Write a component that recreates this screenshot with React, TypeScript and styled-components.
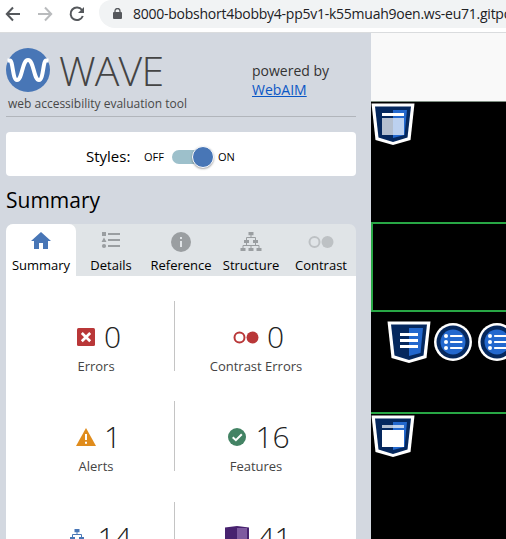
import React from "react";
import styled, { createGlobalStyle } from "styled-components";

const GlobalStyle = createGlobalStyle`
  * { box-sizing: border-box; }
  html, body { margin: 0; padding: 0; height: 100%; overflow: hidden; }
  body { font-family: "Open Sans", "Noto Sans", sans-serif; color: #000; background: #fff; }
`;

const Window = styled.div`
  width: 506px;
  height: 539px;
  display: flex;
  flex-direction: column;
  overflow: hidden;
`;

const BrowserBar = styled.header`
  flex: none;
  height: 33px;
  display: flex;
  background: #fff;
  border-bottom: 1px solid #dadcde;
`;

const NavButtons = styled.div`
  width: 99px;
  height: 28px;
  svg { display: block; }
`;

const AddressBar = styled.div`
  flex: 1;
  height: 28px;
  display: flex;
  background: #f1f3f4;
  border-radius: 12px 0 0 16px;
  overflow: hidden;
`;

const LockBox = styled.div`
  width: 34px;
  flex: none;
  padding: 8px 0 0 14px;
  svg { display: block; }
`;

const Url = styled.span`
  font-size: 14px;
  line-height: 20px;
  padding-top: 4px;
  letter-spacing: -0.25px;
  white-space: nowrap;
  color: #202124;
`;

const Content = styled.div`
  flex: 1;
  min-height: 0;
  display: flex;
`;

const Sidebar = styled.aside`
  width: 371px;
  flex: none;
  padding: 0 15px 0 6px;
  background: #d3d8e0;
  overflow: hidden;
`;

const Brand = styled.div`
  height: 84px;
  display: flex;
  border-bottom: 1px solid #b1b5bb;
`;

const BrandLeft = styled.div`
  width: 246px;
  padding-top: 15px;
`;

const BrandTitle = styled.div`
  height: 44px;
  display: flex;
  gap: 9px;
  svg { flex: none; }
`;

const Wordmark = styled.span`
  font-size: 41px;
  font-weight: 300;
  line-height: 44px;
  letter-spacing: -0.8px;
  color: #444;
`;

const Tagline = styled.div`
  padding: 4px 0 0 2px;
  font-size: 12px;
  line-height: 16px;
  white-space: nowrap;
  color: #484848;
`;

const Powered = styled.div`
  padding-top: 28px;
  font-size: 14px;
  line-height: 19px;
  white-space: nowrap;
  color: #333;
`;

const BrandLink = styled.a`
  display: block;
  color: #0b57c5;
  text-decoration: underline;
`;

const StylesCard = styled.div`
  height: 44px;
  margin-top: 15px;
  padding: 5px 0 0 80px;
  display: flex;
  align-items: center;
  background: #fff;
  border-radius: 4px;
  white-space: nowrap;
`;

const StylesLabel = styled.span`
  width: 58px;
  padding-bottom: 2px;
  font-size: 15px;
  line-height: 20px;
`;

const ToggleText = styled.span<{ $width: number }>`
  width: ${(p) => p.$width}px;
  font-size: 11px;
  line-height: 16px;
`;

const Track = styled.span`
  width: 40px;
  height: 14px;
  margin-right: 6px;
  display: flex;
  align-items: center;
  justify-content: flex-end;
  background: #9dc0cb;
  border-radius: 7px;
`;

const Knob = styled.span`
  width: 22px;
  height: 22px;
  flex: none;
  margin-right: -2px;
  background: #4876b6;
  border: 1px solid #fff;
  border-radius: 50%;
  box-shadow: 0 1px 2px rgba(0, 0, 0, 0.35);
`;

const Heading = styled.h2`
  height: 48px;
  margin: 0;
  padding-top: 10px;
  font-size: 21px;
  font-weight: 400;
  line-height: 28px;
`;

const Tabs = styled.nav`
  height: 52px;
  display: grid;
  grid-template-columns: repeat(5, 70px);
  background: #e0e4e7;
  border-radius: 7px 7px 0 0;
`;

const Tab = styled.div<{ $active?: boolean }>`
  display: flex;
  flex-direction: column;
  align-items: center;
  padding-top: 6px;
  background: ${(p) => (p.$active ? "#fff" : "transparent")};
  border-radius: 7px 7px 0 0;
  font-size: 13px;
  line-height: 18px;
  white-space: nowrap;
  svg { display: block; flex: none; margin-bottom: 5px; overflow: visible; }
`;

const Panel = styled.div`
  height: 330px;
  padding-top: 25px;
  background: #fff;
`;

const StatRow = styled.div`
  height: 100.4px;
  display: grid;
  grid-template-columns: 168px 182px;
`;

const Stat = styled.div`
  height: 70px;
  display: flex;
  flex-direction: column;
  align-items: center;
  padding-right: 18px;
`;

const DividedStat = styled(Stat)`
  width: 169px;
  padding: 0 0 0 12px;
  border-right: 1px solid #c4c4c4;
`;

const Figure = styled.div`
  height: 56px;
  padding: 16px 0 0 5px;
  display: flex;
  align-items: center;
  gap: 8px;
  svg { display: block; flex: none; }
`;

const Count = styled.span`
  font-size: 30px;
  line-height: 40px;
  font-weight: 300;
  color: #222;
`;

const StatLabel = styled.span`
  font-size: 13px;
  line-height: 18px;
  color: #444;
  white-space: nowrap;
`;

const Site = styled.main`
  flex: 1;
  min-width: 0;
  display: flex;
  flex-direction: column;
  background: #000;
  overflow: hidden;
`;

const SiteTop = styled.div`
  flex: none;
  height: 69px;
  background: #f9f9f9;
  border-bottom: 1px solid #7d8d80;
`;

const SiteHero = styled.section`
  flex: none;
  height: 120px;
  svg { display: block; }
`;

const OutlinedSection = styled.section`
  flex: none;
  height: 90px;
  border: solid #28a745;
  border-width: 2px 0 2px 2px;
`;

const MarkerSection = styled.section`
  flex: none;
  height: 100px;
  padding: 8px 0 0 16px;
  display: flex;
  gap: 2px;
  overflow: hidden;
  svg { flex: none; }
  svg:first-child { margin-right: -1px; }
`;

const LowerSection = styled.section`
  flex: 1;
  border-top: 2px solid #28a745;
  svg { display: block; }
`;

const gray = "#9a9ea1";

const WaveLogo = () => (
  <svg width="44" height="44" viewBox="0 0 44 44">
    <circle cx="22" cy="22" r="22" fill="#4876b6" />
    <path d="M1.5 12.5H4C7 12.5 6.5 32 11 32C16.5 32 16 12 22 12C28 12 27.5 32 33 32C37.5 32 37 12.5 40 12.5H42.5" fill="none" stroke="#fff" strokeWidth="4" />
  </svg>
);

const HouseIcon = () => (
  <svg width="24" height="21" viewBox="0 0 24 21">
    <path d="M12 2L22 11H19V19H14V13H10V19H5V11H2Z" fill="#4876b6" />
  </svg>
);

const DetailsIcon = () => (
  <svg width="24" height="21" viewBox="0 0 24 21" fill={gray}>
    <path d="M3 2h4v4H3zM9 3h12v2H9zM9 9h12v2H9zM9 15h12v2H9zM5 7.5l2.5 4.5h-5z" />
    <circle cx="5" cy="16" r="2.1" />
  </svg>
);

const InfoIcon = () => (
  <svg width="24" height="21" viewBox="0 0 24 21">
    <circle cx="12" cy="12" r="10" fill={gray} />
    <path d="M11 7h2v2h-2zM11 11h2v6h-2z" fill="#e0e4e7" />
  </svg>
);

const TreeIcon = ({ color }: { color: string }) => (
  <svg width="24" height="21" viewBox="0 0 24 21">
    <path d="M9.5 2h5v3.2h-5zM5 10h5v3h-5zM14 10h5v3h-5zM1.5 18h5v3h-5zM9.5 18h5v3h-5zM17.5 18h5v3h-5z" fill={color} />
    <path d="M12 5v3M7.5 10V7.5h9V10M7.5 13v2.5M16.5 13v2.5M4 18v-2.5h16V18M12 15.5V18" fill="none" stroke={color} />
  </svg>
);

const ContrastIcon = ({ color, cy }: { color: string; cy: number }) => (
  <svg width="26" height="21" viewBox="0 0 26 21">
    <circle cx="6.5" cy={cy} r="5" fill="none" stroke={color} strokeWidth="2" />
    <circle cx="19.5" cy={cy} r="6" fill={color} />
  </svg>
);

const ErrorIcon = () => (
  <svg width="20" height="20" viewBox="0 0 20 20">
    <rect x="1" y="1" width="18" height="18" rx="1.5" fill="#b93738" />
    <path d="M5.8 6L14.2 14.2M14.2 6L5.8 14.2" stroke="#fff" strokeWidth="2.7" />
  </svg>
);

const AlertIcon = () => (
  <svg width="20" height="20" viewBox="0 0 20 20">
    <path d="M10 1L20 19H0Z" fill="#e08c1c" />
    <path d="M9 7h2v6H9zM9 14.7h2v2H9z" fill="#fff" />
  </svg>
);

const CheckIcon = () => (
  <svg width="20" height="20" viewBox="0 0 20 20">
    <circle cx="10" cy="10" r="9" fill="#438364" />
    <path d="M5.7 10.2l3.2 3 5.9-6" fill="none" stroke="#fff" strokeWidth="2" />
  </svg>
);

const AriaIcon = () => (
  <svg width="24" height="24" viewBox="0 0 24 24">
    <path d="M0 1.5L12 0l12 1.5V24H0Z" fill="#48226f" />
    <path d="M12 2h10v22H12z" fill="#7e5a9f" />
  </svg>
);

const ShieldMarker = ({ kind }: { kind: "header" | "main" | "nav" }) => (
  <svg width="44" height="44" viewBox="0 0 44 44">
    <path d="M.5 1.5H43.5L39.5 38L22 43L4.5 38Z" fill="#fff" />
    <path d="M4 4.5H40L36.5 35.5L22 40L7.5 35.5Z" fill="#05285e" />
    <path d="M22 8H36L33.5 33L22 36Z" fill="#2368ce" />
    {kind === "header" && (
      <>
        <path d="M11 11h22v3H11z" fill="#fff" />
        <path d="M11 16h11v17H11z" fill="#b4bfcf" />
        <path d="M22 16h11v17H22z" fill="#bcd1f0" />
      </>
    )}
    {kind === "main" && (
      <>
        <path d="M11 11h11v3H11z" fill="#b4bfcf" />
        <path d="M22 11h11v3H22z" fill="#bcd1f0" />
        <path d="M11 16h22v17H11z" fill="#fff" />
      </>
    )}
    {kind === "nav" && <path d="M13 13h18v3H13zM13 19h18v3H13zM13 25h18v3H13z" fill="#fff" />}
  </svg>
);

const ListMarker = () => (
  <svg width="42" height="44" viewBox="0 0 42 44">
    <circle cx="21" cy="22" r="19" fill="#fff" />
    <circle cx="21" cy="22" r="16.5" fill="#05285e" />
    <circle cx="21" cy="22" r="12.5" fill="#2368ce" />
    {[16, 22, 28].map((y) => (
      <g key={y} fill="#fff">
        <circle cx="14" cy={y} r="2" />
        <rect x="18" y={y - 1} width="12.5" height="2" rx="0.7" />
      </g>
    ))}
  </svg>
);

const TABS = [
  { name: "Summary", icon: <HouseIcon />, active: true },
  { name: "Details", icon: <DetailsIcon /> },
  { name: "Reference", icon: <InfoIcon /> },
  { name: "Structure", icon: <TreeIcon color={gray} /> },
  { name: "Contrast", icon: <ContrastIcon color="#bdc1c4" cy={12} /> },
];

const STATS = [
  [
    { icon: <ErrorIcon />, count: 0, label: "Errors" },
    { icon: <ContrastIcon color="#b93738" cy={10.5} />, count: 0, label: "Contrast Errors" },
  ],
  [
    { icon: <AlertIcon />, count: 1, label: "Alerts" },
    { icon: <CheckIcon />, count: 16, label: "Features" },
  ],
  [
    { icon: <TreeIcon color="#4876b6" />, count: 14, label: "Structural Elements" },
    { icon: <AriaIcon />, count: 41, label: "ARIA" },
  ],
];

export default function App() {
  return (
    <Window>
      <GlobalStyle />
      <BrowserBar>
        <NavButtons>
          <svg width="99" height="28" viewBox="0 0 99 28" fill="none" strokeWidth="2">
            <path d="M20 14H7M13 7.5L6.8 14L13 20.5" stroke="#55585c" />
            <path d="M38 14H51M45 7.5L51.2 14L45 20.5" stroke="#b9bbbd" />
            <path d="M82 10A6.3 6.3 0 1 0 82.8 16" stroke="#55585c" />
            <path d="M84 7v6h-6z" fill="#55585c" />
          </svg>
        </NavButtons>
        <AddressBar>
          <LockBox>
            <svg width="9" height="12" viewBox="0 0 9 12">
              <path d="M2 5V3a2.5 2.5 0 0 1 5 0v2" fill="none" stroke="#55585c" strokeWidth="1.3" />
              <rect y="4" width="9" height="7" rx="1" fill="#55585c" />
            </svg>
          </LockBox>
          <Url>8000-bobshort4bobby4-pp5v1-k55muah9oen.ws-eu71.gitpod.io</Url>
        </AddressBar>
      </BrowserBar>
      <Content>
        <Sidebar>
          <Brand>
            <BrandLeft>
              <BrandTitle>
                <WaveLogo />
                <Wordmark>WAVE</Wordmark>
              </BrandTitle>
              <Tagline>web accessibility evaluation tool</Tagline>
            </BrandLeft>
            <Powered>
              powered by
              <BrandLink>WebAIM</BrandLink>
            </Powered>
          </Brand>
          <StylesCard>
            <StylesLabel>Styles:</StylesLabel>
            <ToggleText $width={28}>OFF</ToggleText>
            <Track>
              <Knob />
            </Track>
            <ToggleText $width={20}>ON</ToggleText>
          </StylesCard>
          <Heading>Summary</Heading>
          <Tabs>
            {TABS.map((t) => (
              <Tab key={t.name} $active={t.active}>
                {t.icon}
                {t.name}
              </Tab>
            ))}
          </Tabs>
          <Panel>
            {STATS.map(([left, right]) => (
              <StatRow key={left.label}>
                <DividedStat>
                  <Figure>
                    {left.icon}
                    <Count>{left.count}</Count>
                  </Figure>
                  <StatLabel>{left.label}</StatLabel>
                </DividedStat>
                <Stat>
                  <Figure>
                    {right.icon}
                    <Count>{right.count}</Count>
                  </Figure>
                  <StatLabel>{right.label}</StatLabel>
                </Stat>
              </StatRow>
            ))}
          </Panel>
        </Sidebar>
        <Site>
          <SiteTop />
          <SiteHero>
            <ShieldMarker kind="header" />
          </SiteHero>
          <OutlinedSection />
          <MarkerSection>
            <ShieldMarker kind="nav" />
            <ListMarker />
            <ListMarker />
          </MarkerSection>
          <LowerSection>
            <ShieldMarker kind="main" />
          </LowerSection>
        </Site>
      </Content>
    </Window>
  );
}
